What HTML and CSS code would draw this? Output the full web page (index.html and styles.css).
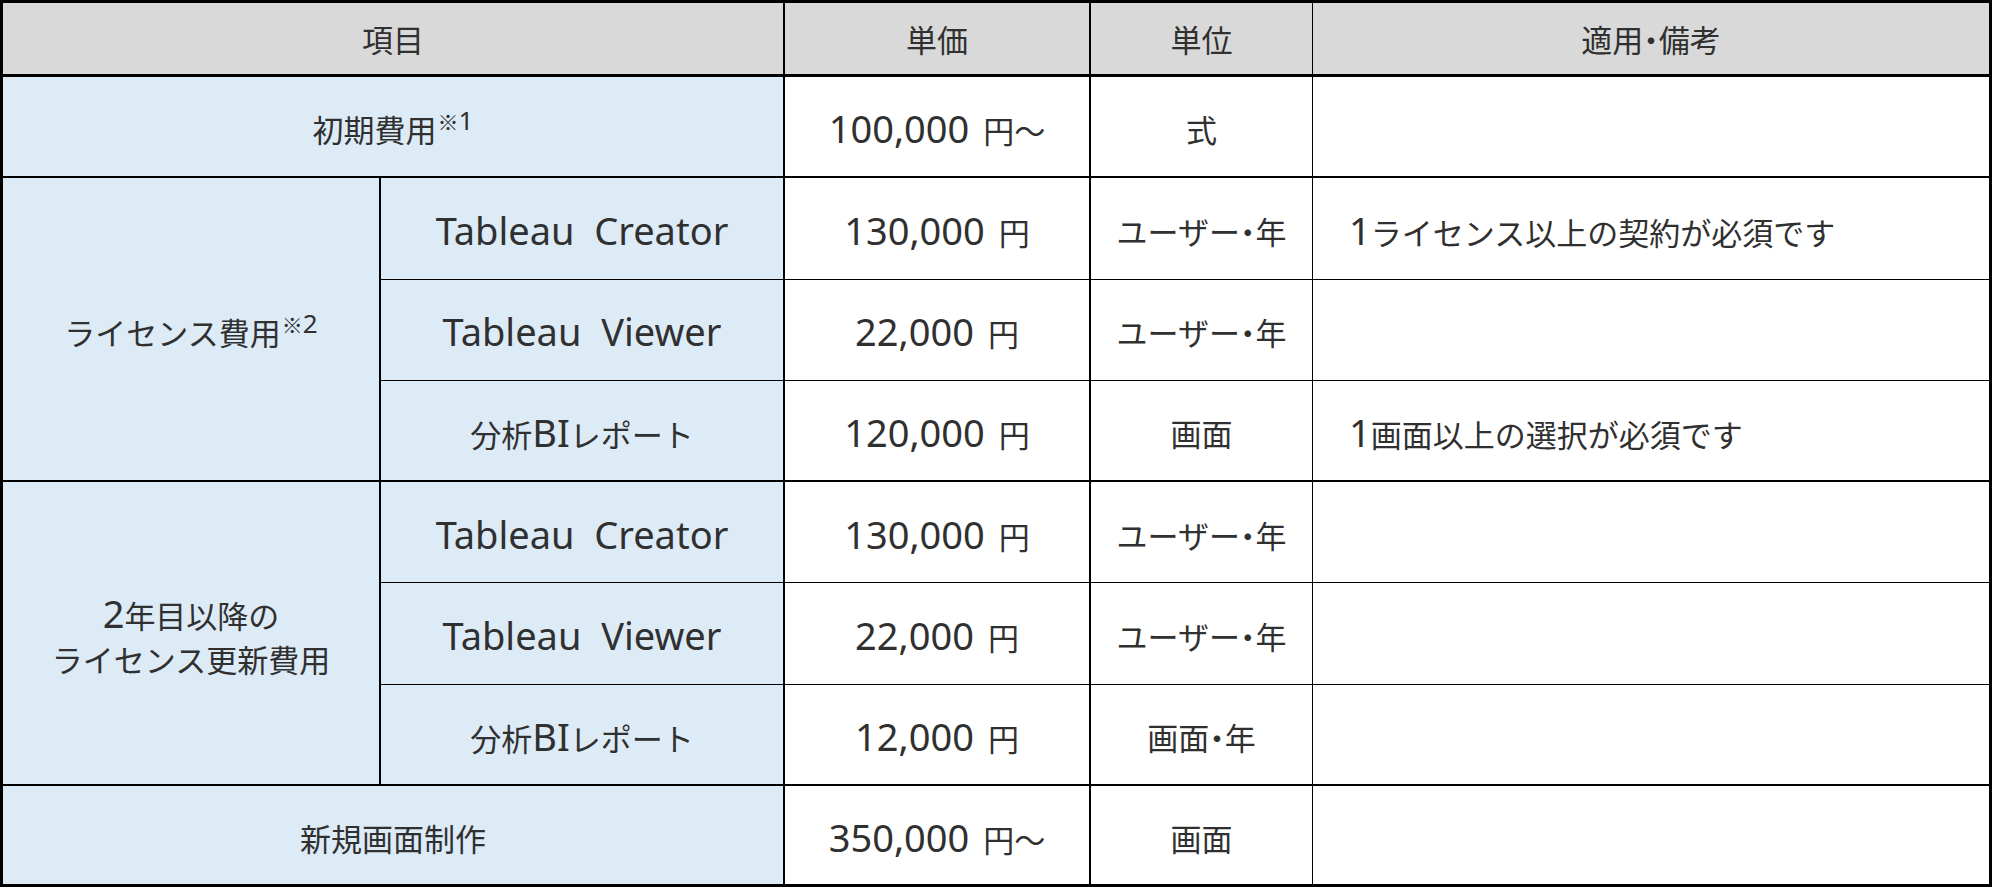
FILE: index.html
```html
<!DOCTYPE html>
<html lang="ja">
<head>
<meta charset="utf-8">
<title>料金表</title>
<link rel="stylesheet" href="styles.css">
</head>
<body>
<table class="price">
  <colgroup>
    <col class="w-grp">
    <col class="w-sub">
    <col class="w-price">
    <col class="w-unit">
    <col class="w-note">
  </colgroup>
  <thead>
    <tr class="head-row">
      <th colspan="2" class="c-sub">項目</th>
      <th class="c-price">単価</th>
      <th class="c-unit">単位</th>
      <th class="c-note">適用<span class="dot">・</span>備考</th>
    </tr>
  </thead>
  <tbody>
    <tr class="row end">
      <th colspan="2" class="lab c-sub">初期費用<sup class="note">※<span class="en">1</span></sup></th>
      <td class="c-price"><span class="en num">100,000</span>円～</td>
      <td class="c-unit">式</td>
      <td class="c-note"></td>
    </tr>
    <tr class="row">
      <th rowspan="3" class="lab c-grp end">ライセンス費用<sup class="note">※<span class="en">2</span></sup></th>
      <th class="lab c-sub"><span class="en">Tableau&nbsp; Creator</span></th>
      <td class="c-price"><span class="en num">130,000</span>円</td>
      <td class="c-unit">ユーザー<span class="dot">・</span>年</td>
      <td class="c-note left"><span class="en">1</span>ライセンス以上の契約が必須です</td>
    </tr>
    <tr class="row">
      <th class="lab c-sub"><span class="en">Tableau&nbsp; Viewer</span></th>
      <td class="c-price"><span class="en num">22,000</span>円</td>
      <td class="c-unit">ユーザー<span class="dot">・</span>年</td>
      <td class="c-note"></td>
    </tr>
    <tr class="row end">
      <th class="lab c-sub">分析<span class="en">BI</span>レポート</th>
      <td class="c-price"><span class="en num">120,000</span>円</td>
      <td class="c-unit">画面</td>
      <td class="c-note left"><span class="en">1</span>画面以上の選択が必須です</td>
    </tr>
    <tr class="row">
      <th rowspan="3" class="lab c-grp end two"><span class="en">2</span>年目以降の<br>ライセンス更新費用</th>
      <th class="lab c-sub"><span class="en">Tableau&nbsp; Creator</span></th>
      <td class="c-price"><span class="en num">130,000</span>円</td>
      <td class="c-unit">ユーザー<span class="dot">・</span>年</td>
      <td class="c-note"></td>
    </tr>
    <tr class="row">
      <th class="lab c-sub"><span class="en">Tableau&nbsp; Viewer</span></th>
      <td class="c-price"><span class="en num">22,000</span>円</td>
      <td class="c-unit">ユーザー<span class="dot">・</span>年</td>
      <td class="c-note"></td>
    </tr>
    <tr class="row end">
      <th class="lab c-sub">分析<span class="en">BI</span>レポート</th>
      <td class="c-price"><span class="en num">12,000</span>円</td>
      <td class="c-unit">画面<span class="dot">・</span>年</td>
      <td class="c-note"></td>
    </tr>
    <tr class="row last">
      <th colspan="2" class="lab c-sub">新規画面制作</th>
      <td class="c-price"><span class="en num">350,000</span>円～</td>
      <td class="c-unit">画面</td>
      <td class="c-note"></td>
    </tr>
  </tbody>
</table>
</body>
</html>
```

FILE: styles.css
```css
html, body {
  margin: 0;
  padding: 0;
  background: #ffffff;
}

body {
  font-family: "Noto Sans CJK JP", "Noto Sans", sans-serif;
  font-size: 31px;
  font-weight: 400;
  color: #303030;
}

.price {
  table-layout: fixed;
  border-collapse: separate;
  border-spacing: 0;
  width: 1992px;
  border-top: 3px solid #000;
  border-left: 3px solid #000;
}

.w-grp { width: 378px; }
.w-sub { width: 404px; }
.w-price { width: 306px; }
.w-unit { width: 222px; }
.w-note { width: 679px; }

.price th,
.price td {
  padding: 0;
  font-weight: 400;
  text-align: center;
  vertical-align: middle;
  border-bottom: 1px solid #000;
  line-height: 44px;
  white-space: nowrap;
}

.head-row { height: 74px; }
.head-row th {
  background: #d9d9d9;
  border-bottom: 3px solid #000;
}

.row { height: 101.3px; }
.row > th,
.row > td { padding-top: 5px; }
.row.end > th,
.row.end > td,
.price th.end { border-bottom: 2px solid #000; }
.row.last > th,
.row.last > td { border-bottom: 3px solid #000; }

.c-grp { border-right: 2px solid #000; }
.c-sub { border-right: 2px solid #000; }
.c-price { border-right: 2px solid #000; }
.c-unit { border-right: 1px solid #000; }
.c-note { border-right: 3px solid #000; }

.lab { background: #ddebf7; }

.price .left {
  text-align: left;
  padding-left: 36px;
}

.en {
  font-family: "Noto Sans", "Noto Sans CJK JP", sans-serif;
  font-size: 38px;
  font-weight: 400;
}

.num { margin-right: 14px; }

.dot {
  font-feature-settings: "halt" 1;
}

.note {
  font-size: 21px;
  line-height: 0;
  vertical-align: 12px;
  margin-left: 1px;
}
.note .en { font-size: 26px; }

.two { line-height: 44px; }
```
